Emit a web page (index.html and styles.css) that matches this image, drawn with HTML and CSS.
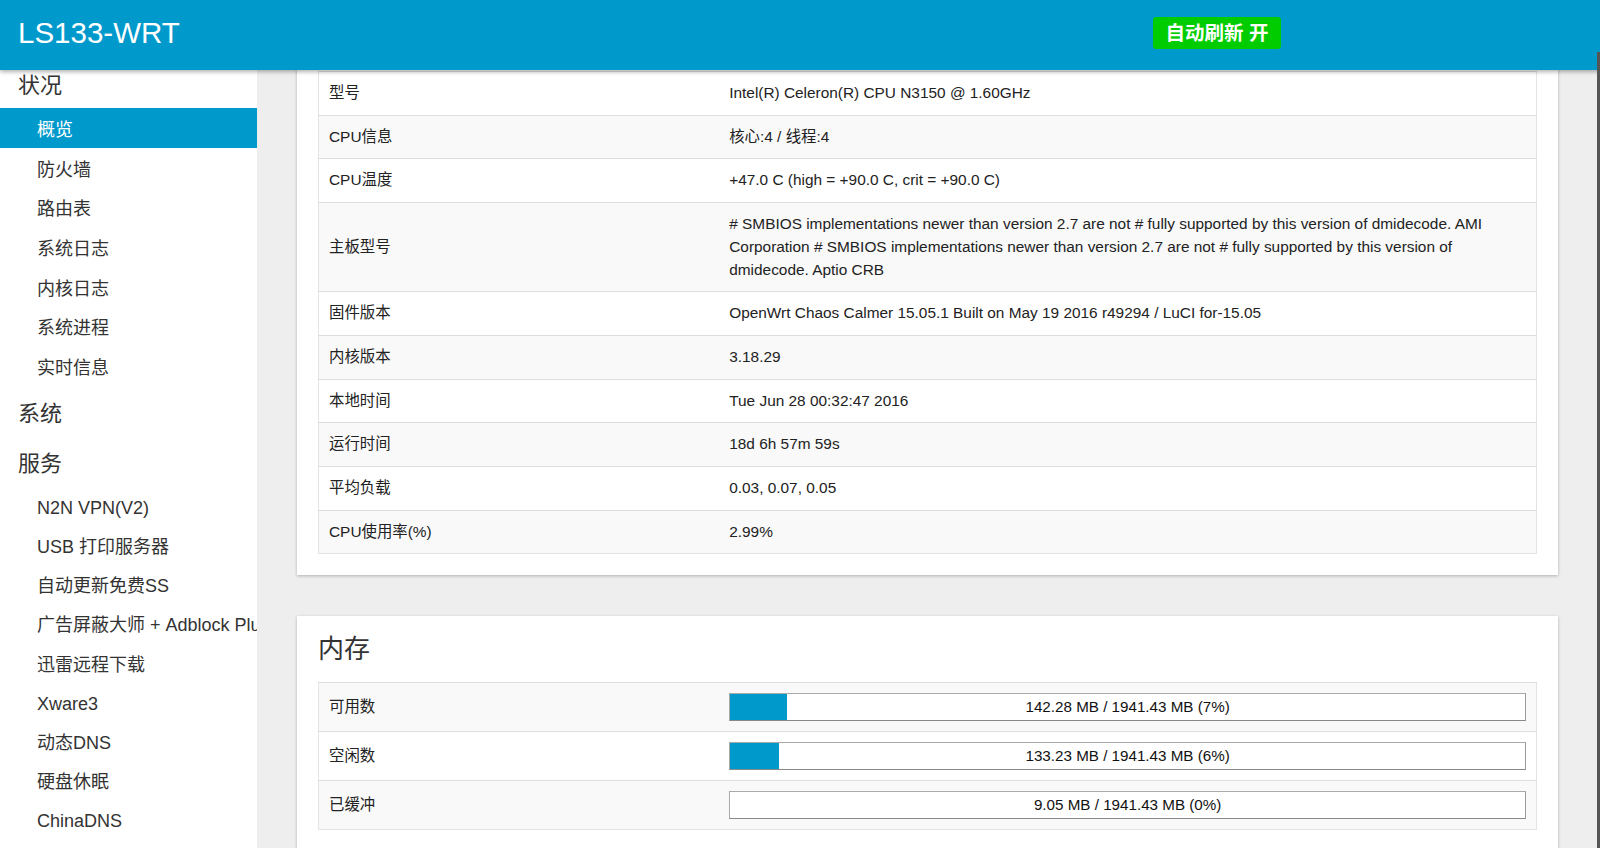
FILE: index.html
```html
<!DOCTYPE html>
<html lang="zh-CN">
<head>
<meta charset="utf-8">
<title>LS133-WRT - 概览</title>
<link rel="stylesheet" href="styles.css">
</head>
<body>
<header class="header">
  <div class="brand">LS133-WRT</div>
  <div class="refresh">自动刷新 开</div>
</header>
<div class="layout">
  <nav class="sidebar">
    <div class="nav-heading">状况</div>
    <div class="nav-group">
      <div class="nav-item active">概览</div>
      <div class="nav-item">防火墙</div>
      <div class="nav-item">路由表</div>
      <div class="nav-item">系统日志</div>
      <div class="nav-item">内核日志</div>
      <div class="nav-item">系统进程</div>
      <div class="nav-item">实时信息</div>
    </div>
    <div class="nav-heading">系统</div>
    <div class="nav-heading">服务</div>
    <div class="nav-group compact">
      <div class="nav-item">N2N VPN(V2)</div>
      <div class="nav-item">USB 打印服务器</div>
      <div class="nav-item">自动更新免费SS</div>
      <div class="nav-item">广告屏蔽大师 + Adblock Plus</div>
      <div class="nav-item">迅雷远程下载</div>
      <div class="nav-item">Xware3</div>
      <div class="nav-item">动态DNS</div>
      <div class="nav-item">硬盘休眠</div>
      <div class="nav-item">ChinaDNS</div>
    </div>
  </nav>
  <main class="main">
    <section class="card">
      <table class="info">
        <tr class="row"><td class="label">型号</td><td class="value">Intel(R) Celeron(R) CPU N3150 @ 1.60GHz</td></tr>
        <tr class="row alt"><td class="label">CPU信息</td><td class="value">核心:4 / 线程:4</td></tr>
        <tr class="row"><td class="label">CPU温度</td><td class="value">+47.0 C (high = +90.0 C, crit = +90.0 C)</td></tr>
        <tr class="row alt"><td class="label">主板型号</td><td class="value"># SMBIOS implementations newer than version 2.7 are not # fully supported by this version of dmidecode. AMI Corporation # SMBIOS implementations newer than version 2.7 are not # fully supported by this version of dmidecode. Aptio CRB</td></tr>
        <tr class="row"><td class="label">固件版本</td><td class="value">OpenWrt Chaos Calmer 15.05.1 Built on May 19 2016 r49294 / LuCI for-15.05</td></tr>
        <tr class="row alt"><td class="label">内核版本</td><td class="value">3.18.29</td></tr>
        <tr class="row"><td class="label">本地时间</td><td class="value">Tue Jun 28 00:32:47 2016</td></tr>
        <tr class="row alt"><td class="label">运行时间</td><td class="value">18d 6h 57m 59s</td></tr>
        <tr class="row"><td class="label">平均负载</td><td class="value">0.03, 0.07, 0.05</td></tr>
        <tr class="row alt"><td class="label">CPU使用率(%)</td><td class="value">2.99%</td></tr>
      </table>
    </section>
    <section class="card">
      <h2 class="card-title">内存</h2>
      <table class="info">
        <tr class="row alt mem"><td class="label">可用数</td><td class="value">
          <div class="bar"><div class="fill" style="width:7.2%"></div><span class="bar-text">142.28 MB / 1941.43 MB (7%)</span></div>
        </td></tr>
        <tr class="row mem"><td class="label">空闲数</td><td class="value">
          <div class="bar"><div class="fill" style="width:6.15%"></div><span class="bar-text">133.23 MB / 1941.43 MB (6%)</span></div>
        </td></tr>
        <tr class="row alt mem"><td class="label">已缓冲</td><td class="value">
          <div class="bar"><div class="fill" style="width:0%"></div><span class="bar-text">9.05 MB / 1941.43 MB (0%)</span></div>
        </td></tr>
      </table>
    </section>
  </main>
</div>
<div class="scroll-thumb"></div>
</body>
</html>
```

FILE: styles.css
```css
html, body {
  margin: 0;
  padding: 0;
  width: 1600px;
  height: 848px;
  overflow: hidden;
}

body {
  font-family: "Liberation Sans", "Noto Sans CJK SC", sans-serif;
  color: #333;
  background: #eee;
  position: relative;
}

.header {
  position: relative;
  z-index: 5;
  height: 70px;
  background: #0099cc;
  box-shadow: 0 2px 4px rgba(0, 0, 0, 0.3);
  display: flex;
  align-items: center;
}

.brand {
  color: #fff;
  font-size: 29.5px;
  padding-left: 18px;
  padding-bottom: 4px;
}

.refresh {
  margin-left: auto;
  margin-right: 319px;
  margin-bottom: 4px;
  width: 128px;
  height: 32px;
  box-sizing: border-box;
  background: #00cc00;
  color: #fff;
  border-radius: 3px;
  font-size: 19.5px;
  font-weight: bold;
  line-height: 32px;
  text-align: center;
}

.layout {
  display: flex;
  margin-top: -20px;
  height: 818px;
}

.sidebar {
  width: 257px;
  flex: none;
  background: #fff;
  padding-top: 8px;
  overflow: hidden;
  white-space: nowrap;
}

.nav-heading {
  height: 50px;
  box-sizing: border-box;
  padding: 13px 0 0 18px;
  font-size: 22px;
  line-height: 30px;
  color: #333;
}

.nav-item {
  height: 39.7px;
  box-sizing: border-box;
  padding: 6px 0 0 37px;
  line-height: 33.7px;
  font-size: 18px;
  color: #333;
}

.nav-group.compact .nav-item {
  height: 39.2px;
  padding-top: 5px;
  line-height: 34.2px;
}

.nav-item.active {
  background: #0099cc;
  color: #fff;
}

.main {
  flex: 1;
  padding: 0 42px 0 40px;
  overflow: hidden;
}

.card {
  background: #fff;
  padding: 21px;
  margin-bottom: 41px;
  box-shadow: 0 1px 3px rgba(0, 0, 0, 0.25);
}

.card-title {
  margin: 0 0 21px;
  font-size: 26px;
  font-weight: normal;
  line-height: 24px;
  color: #333;
}

.info {
  width: 100%;
  border-collapse: collapse;
  border: 1px solid #e4e4e4;
  font-size: 15.4px;
  line-height: 22.7px;
  color: #222;
}

.row td {
  border-top: 1px solid #ddd;
  padding: 10px 10px;
  vertical-align: middle;
}

.row.alt td {
  background: #f9f9f9;
}

.label {
  width: 32.9%;
}

.bar {
  position: relative;
  height: 28px;
  box-sizing: border-box;
  border: 1px solid #aaa;
  border-bottom-color: #888;
  border-right-color: #999;
  background: #fff;
}

.fill {
  height: 100%;
  background: #0099cc;
}

.bar-text {
  position: absolute;
  left: 0;
  right: 0;
  top: 0;
  line-height: 26px;
  text-align: center;
  font-size: 15.2px;
  color: #111;
}

.scroll-thumb {
  position: absolute;
  right: 0;
  top: 52px;
  width: 3px;
  height: 796px;
  background: #555;
  z-index: 6;
}
```
